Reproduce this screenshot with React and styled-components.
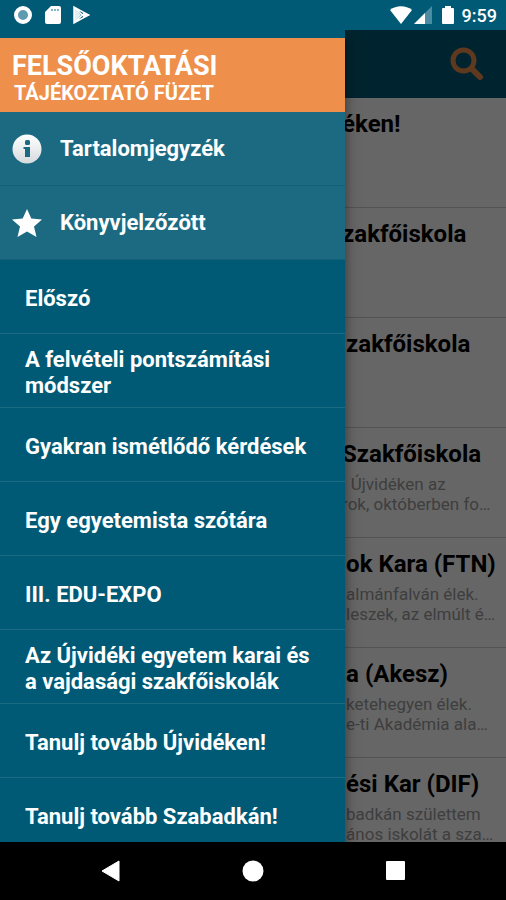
import React from 'react'
import styled, { createGlobalStyle } from "styled-components";

const menuItems = [
    "Előszó",
    "A felvételi pontszámítási módszer",
    "Gyakran ismétlődő kérdések",
    "Egy egyetemista szótára",
    "III. EDU-EXPO",
    "Az Újvidéki egyetem karai és a vajdasági szakfőiskolák",
    "Tanulj tovább Újvidéken!",
    "Tanulj tovább Szabadkán!",
];

const articles = [
    {title: "éken!", tucked: true},
    {title: "zakfőiskola", tucked: true},
    {title: "zakfőiskola"},
    {title: "Szakfőiskola", lines: [". Újvidéken az", "rok, októberben fo…"], tucked: true},
    {title: "ok Kara (FTN)", lines: ["almánfalván élek.", "leszek, az elmúlt é…"]},
    {title: "a (Akesz)", lines: ["ketehegyen élek.", "e-ti Akadémia ala…"]},
    {title: "ési Kar (DIF)", lines: ["badkán születtem", "ános iskolát a sza…"]},
];

const StatusIcons = () => (
    <IconGroup>
        <svg width="20" height="20" viewBox="0 0 20 20">
            <circle cx="10" cy="10" r="7" fill="#5f9bb0" stroke="#fff" strokeWidth="4"/>
        </svg>
        <svg width="16" height="20" viewBox="0 0 16 20">
            <path d="M6 1h8a2 2 0 0 1 2 2v14a2 2 0 0 1-2 2H2a2 2 0 0 1-2-2V7z" fill="#fff"/>
            <path d="M7 4v2M10 4v2M13 4v2" stroke="#5f9bb0" strokeWidth="1.5"/>
        </svg>
        <svg width="18" height="20" viewBox="0 0 18 20">
            <path d="M1 2v16l7-8z" fill="#e4eff2"/>
            <path d="M11.500 7.500L17 10l-5.500 2.500L9.500 10z" fill="#fff"/>
            <path d="M1 18V2l14.500 8zM1 2l11 10.500M1 18L12 7.500" fill="none" stroke="#fff" strokeWidth="1.500"/>
        </svg>
    </IconGroup>
)

const SignalIcons = () => (
    <SignalGroup>
        <svg width="22" height="20" viewBox="0 0 22 20">
            <path d="M0 5C6 0 16 0 22 5L11 19z" fill="#fff"/>
        </svg>
        <svg width="18" height="20" viewBox="0 0 18 20">
            <path d="M18 1v18H0z" fill="#4b8ca2"/>
            <path d="M11 8v11H0z" fill="#fff"/>
        </svg>
        <Battery width="12" height="20" viewBox="0 0 12 20">
            <path d="M3 1h6v2h2a1 1 0 0 1 1 1v14a1 1 0 0 1-1 1H1a1 1 0 0 1-1-1V4a1 1 0 0 1 1-1h2z" fill="#fff"/>
        </Battery>
    </SignalGroup>
)

const InfoIcon = () => (
    <svg width="30" height="30" viewBox="0 0 30 30">
        <defs>
            <linearGradient id="shine" x1="0" y1="0" x2="0" y2="1">
                <stop offset="0" stopColor="#fff"/>
                <stop offset="1" stopColor="#d6dadd"/>
            </linearGradient>
        </defs>
        <circle cx="15" cy="15" r="14.500" fill="url(#shine)"/>
        <rect x="13" y="6" width="5" height="5" rx="1.500" fill="#1c6a82"/>
        <path d="M11.500 13H18v10h-5v-8h-1.500z" fill="#1c6a82"/>
    </svg>
)

const StarIcon = () => (
    <svg width="30" height="30" viewBox="0 0 30 30">
        <path d="M15 1l4.300 9.500L30 11.500l-8 7 2.500 10.500L15 23.500 5.500 29 8 18.500l-8-7 10.700-1z" fill="#fff"/>
    </svg>
)

const App = () => {
    return (
        <Phone>
            <GlobalStyle/>
            <StatusBar>
                <StatusIcons/>
                <SignalIcons/>
                <Clock>9:59</Clock>
            </StatusBar>
            <Stage>
                <AppBar>
                    <IconButton aria-label="Keresés">
                        <svg width="34" height="34" viewBox="0 0 34 34" fill="none" stroke="#ee8f4b">
                            <circle cx="13.500" cy="13.500" r="10.500" strokeWidth="5"/>
                            <path d="M21.500 21.500l8.500 8.500" strokeWidth="6" strokeLinecap="round"/>
                        </svg>
                    </IconButton>
                </AppBar>
                <ArticleList>
                    {articles.map((article, i) => (
                        <ArticleRow key={i} $tucked={article.tucked}>
                            <ArticleTitle>{article.title}</ArticleTitle>
                            {article.lines && article.lines.map((line) => (
                                <ArticleText key={line}>{line}</ArticleText>
                            ))}
                        </ArticleRow>
                    ))}
                </ArticleList>
                <Scrim/>
                <Drawer>
                    <DrawerHeader>
                        <Brand>FELSŐOKTATÁSI</Brand>
                        <BrandSub>TÁJÉKOZTATÓ FÜZET</BrandSub>
                    </DrawerHeader>
                    <ShortcutItem><InfoIcon/>Tartalomjegyzék</ShortcutItem>
                    <ShortcutItem><StarIcon/>Könyvjelzőzött</ShortcutItem>
                    {menuItems.map((item) => (
                        <MenuItem key={item}>{item}</MenuItem>
                    ))}
                </Drawer>
            </Stage>
            <NavBar>
                <NavButton aria-label="Vissza">
                    <svg width="22" height="22" viewBox="0 0 22 22"><path d="M19 1v20L2 11z" fill="#fff" stroke="#fff" strokeLinejoin="round"/></svg>
                </NavButton>
                <NavButton aria-label="Kezdőlap">
                    <svg width="22" height="22" viewBox="0 0 22 22"><circle cx="11" cy="11" r="10.500" fill="#fff"/></svg>
                </NavButton>
                <NavButton aria-label="Áttekintés">
                    <svg width="22" height="22" viewBox="0 0 22 22"><rect x="2" y="1" width="19" height="19" rx="1" fill="#fff"/></svg>
                </NavButton>
            </NavBar>
        </Phone>
    )
}

const GlobalStyle = createGlobalStyle`
    body {
        margin: 0;
        font-family: Roboto, "Noto Sans", sans-serif;
    }

    * {
        box-sizing: border-box;
    }

    button {
        border: none;
        padding: 0;
        background: none;
        font-family: inherit;
        cursor: pointer;
    }

    svg {
        display: block;
        flex-shrink: 0;
    }
`;

const Phone = styled.div`
    display: flex;
    flex-direction: column;
    height: 100vh;
    background: #000;
`;

const StatusBar = styled.div`
    display: flex;
    align-items: center;
    height: 30px;
    flex-shrink: 0;
    padding: 0 9px 0 13px;
    background: #005a76;
`;

const IconGroup = styled.div`
    display: flex;
    gap: 12px;
    margin-right: auto;
`;

const SignalGroup = styled.div`
    display: flex;
    gap: 2px;
    margin-right: 8px;
`;

const Battery = styled.svg`
    margin-left: 8px;
`;

const Clock = styled.div`
    font-size: 18px;
    font-weight: 500;
    color: #fff;
`;

const Stage = styled.div`
    position: relative;
    flex: 1;
    min-height: 0;
    overflow: hidden;
    background: #fff;
`;

const AppBar = styled.header`
    display: flex;
    align-items: center;
    justify-content: flex-end;
    height: 68px;
    padding: 0 22px;
    background: #005a76;
`;

const IconButton = styled.button`
    display: flex;
`;

const ArticleList = styled.ul`
    margin: 0;
    padding: 0;
    list-style: none;
`;

const ArticleRow = styled.li`
    height: 110px;
    padding-top: 12px;
    padding-left: calc(68% + ${props => props.$tucked ? "-2px" : "2px"});
    border-bottom: 1px solid #d0d0d0;
    white-space: nowrap;
`;

const ArticleTitle = styled.h2`
    margin: 0 0 6px;
    font-size: 24px;
    line-height: 28px;
    font-weight: 700;
    color: #000;
`;

const ArticleText = styled.div`
    font-size: 17px;
    line-height: 20px;
    color: #9c9c9c;
`;

const Scrim = styled.div`
    position: absolute;
    inset: 0;
    background: rgba(0, 0, 0, 0.6);
`;

const Drawer = styled.nav`
    position: absolute;
    top: 0;
    bottom: 0;
    left: 0;
    width: 68.2%;
    padding-top: 8px;
    overflow: hidden;
    background: #005a76;
    box-shadow: 0 8px 12px rgba(0, 0, 0, 0.5);
`;

const DrawerHeader = styled.div`
    height: 74px;
    padding: 13px 12px 0;
    background: #ee8f4b;
    color: #fff;
    font-weight: 700;
`;

const Brand = styled.div`
    font-size: 27px;
    line-height: 30px;
`;

const BrandSub = styled.div`
    padding-left: 2px;
    font-size: 20px;
    line-height: 24px;
`;

const MenuItem = styled.button`
    display: flex;
    align-items: center;
    width: 100%;
    height: 74px;
    padding: 4px 25px 0;
    border-bottom: 1px solid #1c6a82;
    color: #fff;
    font-size: 22px;
    line-height: 26px;
    font-weight: 700;
    text-align: left;
`;

const ShortcutItem = styled(MenuItem)`
    gap: 18px;
    padding: 1px 12px 0;
    background: #1c6a82;
    border-bottom-color: #125f78;
`;

const NavBar = styled.div`
    display: flex;
    align-items: center;
    justify-content: space-around;
    height: 58px;
    flex-shrink: 0;
    padding: 0 40px;
    background: #000;
`;

const NavButton = styled.button`
    display: flex;
`;

export default App;
